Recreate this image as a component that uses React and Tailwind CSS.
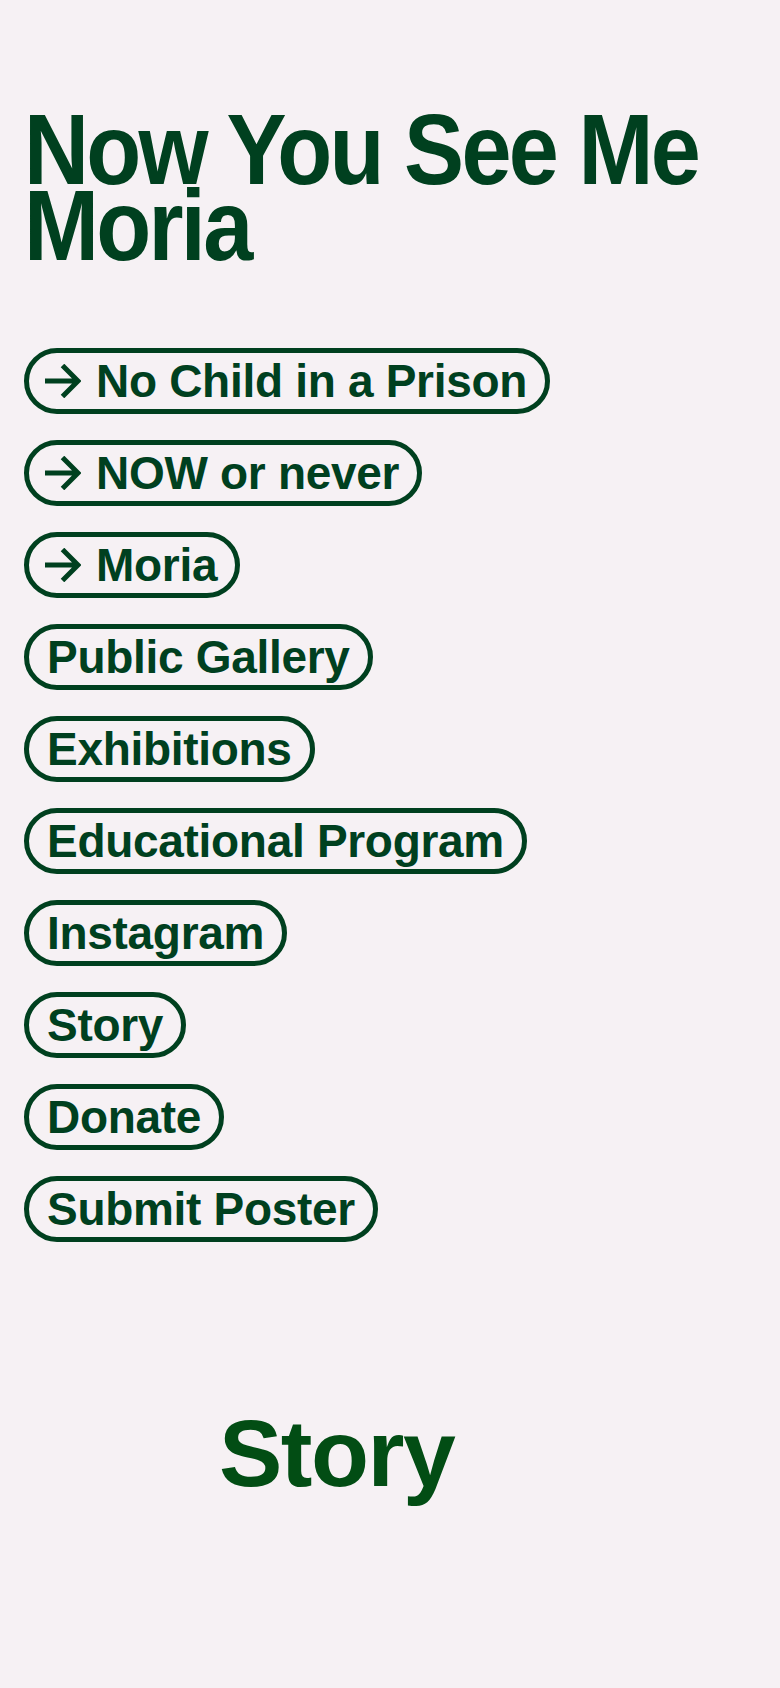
import React from "react";

const links = [
  { label: "No Child in a Prison", arrow: true },
  { label: "NOW or never", arrow: true },
  { label: "Moria", arrow: true },
  { label: "Public Gallery" },
  { label: "Exhibitions" },
  { label: "Educational Program" },
  { label: "Instagram" },
  { label: "Story" },
  { label: "Donate" },
  { label: "Submit Poster" },
];

function Arrow() {
  return (
    <svg
      width="36"
      height="34"
      viewBox="0 0 36 34"
      fill="none"
      className="ml-[-2px] mr-[15px] shrink-0"
    >
      <path
        d="M0 17 H33 M17.5 1.5 L33 17 L17.5 32.5"
        stroke="#00401f"
        strokeWidth="5"
        strokeLinecap="butt"
        strokeLinejoin="miter"
      />
    </svg>
  );
}

export default function App() {
  return (
    <div
      className="min-h-[1688px] w-full bg-[#f6f1f4] pl-[24px] pt-[111px] text-[#00401f]"
      style={{ fontFamily: '"Liberation Sans", Arial, sans-serif' }}
    >
      <h1 className="origin-left scale-x-[0.9] whitespace-nowrap text-[100px] font-bold leading-[76px] tracking-[-3px]">
        Now You See Me
        <br />
        Moria
      </h1>

      <nav className="mt-[85px] flex flex-col items-start gap-[26px]">
        {links.map((l) => (
          <a
            key={l.label}
            href="#"
            className="flex h-[66px] items-center rounded-full border-[5px] border-[#00401f] pl-[18px] pr-[18px] text-[46px] font-bold leading-[56px] tracking-[-0.3px] text-[#00401f] no-underline"
          >
            {l.arrow && <Arrow />}
            <span className="whitespace-nowrap">{l.label}</span>
          </a>
        ))}
      </nav>

      <div className="mt-[164px] pl-[195px]">
        <h2 className="text-[95px] font-bold leading-[95px] tracking-[-1.5px] text-[#024d14]">
          Story
        </h2>
      </div>
    </div>
  );
}
